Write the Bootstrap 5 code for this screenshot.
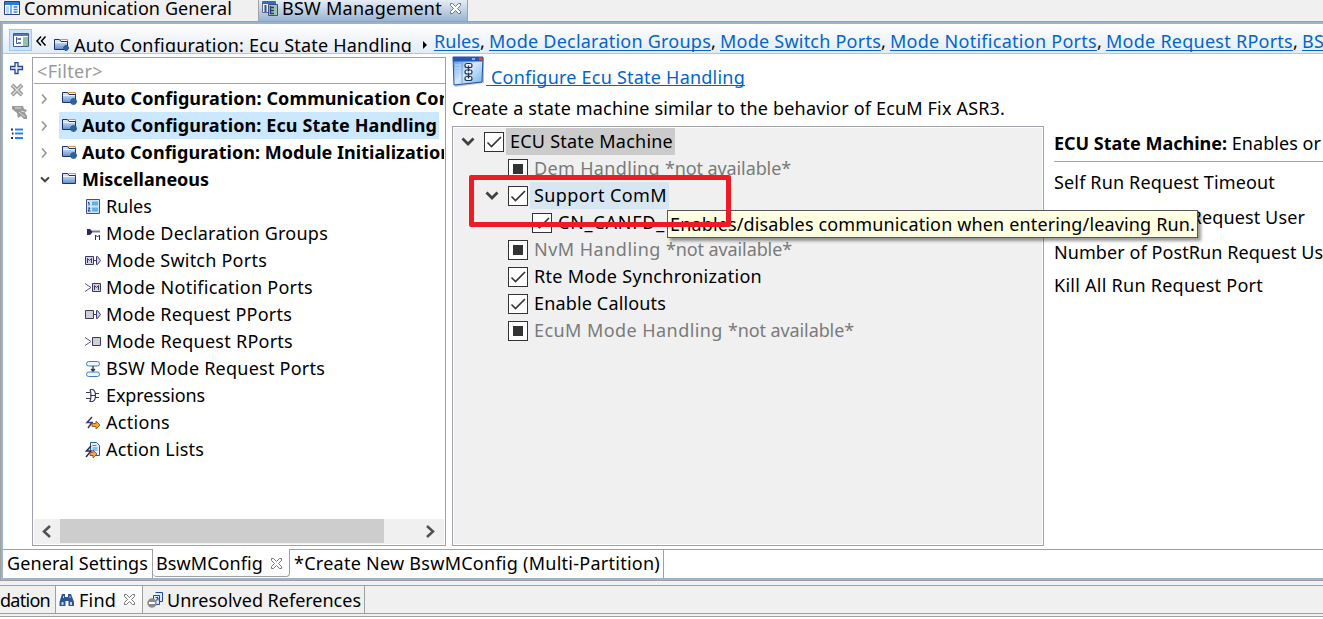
<!DOCTYPE html>
<html lang="en">
<head>
<meta charset="utf-8">
<title>BSW Management</title>
<link href="https://cdn.jsdelivr.net/npm/bootstrap@5.3.0/dist/css/bootstrap.min.css" rel="stylesheet">
<style>
body{width:1323px;height:619px;overflow:hidden;font-family:"Noto Sans","Open Sans",sans-serif;font-size:18px;line-height:27px;color:#000;background:#fff}
svg{display:block;flex:none}
[data-w]{display:inline-block;white-space:pre;flex:none}
.window{height:617px;background:#f0f0f0}
.toptabs{height:21px}
.toptabs>div{height:21px;line-height:16px}
.tab-a{width:259px;padding-left:4px;border-right:1px solid #a0a0a0}
.tab-b{width:209px;padding-left:3px;background:linear-gradient(#e6edf5,#99b4d1);border-right:1px solid #a0a0a0}
.frame{height:560px;border-top:1px solid #a0a0a0;border-left:1px solid #a0a0a0;border-bottom:1px solid #a0a0a0}
.inner{height:558px;border:solid #99b4d1;border-width:2px 0 2px 2px;background:#fff}
.crumbs{height:30px;background:linear-gradient(#fff,#e4ebf4);border-bottom:1px solid #b4c6da;overflow:hidden}
.outline-btn{width:23px;height:22px;margin:5px 0 0 6px;background:#cce4fb;border:1px solid #99caf5;padding:3px 0 0 3px;flex:none}
.crumb-now{height:28px;overflow:hidden;padding-top:8px;flex:none}
.lnk{color:#0066cc;border-bottom:1px solid #0066cc;line-height:28px;height:24px;flex:none;white-space:pre}
.crumb-links{padding-top:3px;line-height:28px}
.title-link{margin:8px 0 0 1px;padding-left:5px;line-height:30px}
.comma{width:9px;flex:none}
.tools{width:29px;padding:8px 0 0 7px}
.side{width:414px;height:489px;margin-top:3px;border:1px solid #a0a0a8;overflow:hidden}
.filter{height:26px;border-bottom:1px solid #a0a0a8;color:#999;padding-left:3px;margin-left:1px;line-height:26px}
.tree{height:435px;padding-top:1px}
.trow{height:27px;width:411px;overflow:hidden}
.trow .chev{width:26px;padding-left:7px}
.trow .lab{height:27px;width:380px;padding-left:2px}
.trow .lab svg{margin-right:4px}
.trow.picked .lab{background:#cce8ff}
.leaf{height:27px;padding-left:52px}
.leaf svg{margin-right:5px}
.hscroll{height:25px;margin:0 1px;background:#f0f0f0}
.thumb{width:324px;height:24px;background:#cdcdcd}
.main-col{width:592px;margin-left:6px}
.title-row{height:39px}
.title-row svg{margin-top:2px}
.desc{height:33px;padding-top:2px}
.states{height:420px;border:1px solid #a0a0a8;background:#f0f0f0;box-shadow:inset 0 0 0 1px #fff;padding-top:1px}
.srow{height:27px}
.srow.l1{padding-left:8px}.srow.l2{padding-left:32px}.srow.l3{padding-left:56px}
.srow .exp{width:23px}
.box{width:20px;height:20px;border:1px solid #333;background:#fff;margin-right:2px}
.slab{height:27px;padding:0 2px 0 4px;white-space:pre}
.off{color:#7a7a7a}
.info{margin-left:10px;width:269px;overflow:hidden;padding-top:76px}
.info>div{white-space:nowrap;overflow:hidden}
.info .rule{height:32px;border-bottom:1px solid #a0a0a0}
.info .field{height:35px;padding-top:7px}
.btabs{height:29px;border-top:1px solid #a0a0a0;margin-top:3px}
.btabs>div{height:28px;line-height:27px;border-right:1px solid #a0a0a0}
.btabs .cur{margin-top:-1px;padding-top:1px;height:28px;background:#fff;border-bottom:1px solid #a0a0a0;border-radius:0 0 4px 4px;line-height:28px}
.views{height:29px;margin-top:4px;border:solid #a0a0a0;border-width:1px 0}
.views>div{height:27px;border-right:1px solid #a0a0a0;line-height:28px}
.views .cur{height:27px;background:linear-gradient(#fff,#f4f4f4)}
.views div.align-items-center span{margin-top:1px}
.tip{left:667px;top:210px;width:531px;height:28px;background:#ffffe1;border:1px solid #575757;box-shadow:3px 3px 3px rgba(0,0,0,.4);padding-left:2px;line-height:26px}
.frame-red{left:469px;top:175px;width:262px;height:52px;border:5px solid #ed1c24;border-radius:2px}
</style>
</head>
<body>
<svg width="0" height="0" class="position-absolute">
<defs>
<linearGradient id="fg" x1="0" y1="0" x2="0" y2="1"><stop offset="0" stop-color="#e8f2fc"/><stop offset="1" stop-color="#5f8fce"/></linearGradient>
<linearGradient id="wg" x1="0" y1="0" x2="1" y2="1"><stop offset="0" stop-color="#4f8fe0"/><stop offset=".5" stop-color="#d4e8fb"/><stop offset="1" stop-color="#6fb4ee"/></linearGradient>
<symbol id="folder" viewBox="0 0 16 16"><path d="M6.500 3.500V1.500h7V4" fill="#fff" stroke="#d89a2c"/><path d="M.5 11.500V1.500h5l1.500 2h6.500v8z" fill="url(#fg)" stroke="#1f2f74"/><path d="M1 4.500h12" stroke="#fff" opacity=".8"/></symbol>
<symbol id="gear" viewBox="0 0 6 6"><path d="M2 0h2v1l1-.5.500 1-.5.500h1v2H5l.5 1-1 .5L4 5v1H2V5l-1 .5-.5-1L1 4H0V2h1L.5 1.500l1-1L2 1z" fill="#31609f"/></symbol>
<symbol id="closer" viewBox="0 0 11 11"><path d="M.5.500h2l3 3 3-3h2v2l-3 3 3 3v2h-2l-3-3-3 3h-2v-2l3-3-3-3z" fill="#fff" stroke="#686868" stroke-width=".9"/></symbol>
<symbol id="right" viewBox="0 0 8 12"><path d="M2 1.500 6 6l-4 4.500" fill="none" stroke="#999" stroke-width="1.700"/></symbol>
<symbol id="down" viewBox="0 0 14 9"><path d="M1.500 1.500 7 7l5.500-5.500" fill="none" stroke="#404040" stroke-width="2.800"/></symbol>
<symbol id="tick" viewBox="0 0 18 18"><path d="M2.500 9.500 6.500 13.500 16 4" fill="none" stroke="#333" stroke-width="1.600"/></symbol>
<symbol id="full" viewBox="0 0 18 18"><path d="M4 4h10v10H4z" fill="#333"/></symbol>
</defs>
</svg>
<div class="window position-relative">
  <div class="toptabs d-flex">
    <div class="tab-a d-flex">
      <svg width="16" height="16"><path d="M.5 1.500h15v13H.5z" fill="#fff" stroke="#27427c"/><path d="M1 2h14v3H1z" fill="#2b7fd0"/><path d="M2 6h3v8H2z" fill="#b8d8f4"/><path d="M7 5v9M9.500 7h4M9.500 9.500h4M9.500 12h4" stroke="#2b8be0" stroke-width="1.300"/></svg>
      <span class="ms-1" data-w="208">Communication General</span>
    </div>
    <div class="tab-b d-flex">
      <svg width="16" height="16"><path d="M.5 1.500h13v11H.5z" fill="#e8eef5" stroke="#5a6a8c"/><path d="M1 1.500h12v2.500H1z" fill="#2f6cbb"/><path d="M3.500 5v7" stroke="#3c4e82" stroke-width="2"/><path d="M6.500 4.500h9v11h-9z" fill="#9cc4b0" stroke="#3c4e82"/><path d="M8.500 6v8M8 7.500h4M8 10.500h4M8 13.500h4" stroke="#2c3a70" stroke-width="1.300"/></svg>
      <span class="ms-1" data-w="160">BSW Management</span>
      <svg style="margin:3px 0 0 8px" width="11" height="11"><use href="#closer"/></svg>
    </div>
  </div>
  <div class="frame"><div class="inner">
    <div class="crumbs d-flex">
      <div class="outline-btn"><svg width="16" height="14"><path d="M.5.500h15v13H.5z" fill="#fff" stroke="#465a87"/><path d="M1 1h14v2H1z" fill="#5d75ad"/><path d="M3.500 4v6.500H5M3.500 6H5" fill="none" stroke="#465a87"/><path d="M5 5h3v2H5zM5 9h3v2H5z" fill="#6b82b8"/><path d="M10 4h5v9h-5z" fill="#8ec5a4"/></svg></div>
      <svg style="margin-left:3px" width="12" height="30"><path d="M6 12.500 2 17l4 4.500M10.500 12.500l-4 4.500 4 4.500" fill="none" stroke="#000" stroke-width="1.500"/></svg>
      <div class="crumb-now d-flex" style="margin-left:3px"><svg style="margin-top:6px" class="ms-1" width="16" height="16"><use href="#folder" width="16" height="16"/><use href="#gear" x="9" y="7" width="6" height="6"/></svg><span style="margin-left:4px" data-w="338">Auto Configuration: Ecu State Handling</span></div>
      <svg style="margin-left:10px" width="12" height="30"><path d="M1 17v8l4-4z"/></svg>
      <div class="crumb-links d-flex"><span class="lnk" data-w="46">Rules</span><span class="comma">,</span><span class="lnk" data-w="222">Mode Declaration Groups</span><span class="comma">,</span><span class="lnk" data-w="161">Mode Switch Ports</span><span class="comma">,</span><span class="lnk" data-w="207">Mode Notification Ports</span><span class="comma">,</span><span class="lnk" data-w="187">Mode Request RPorts</span><span class="comma">,</span><span class="lnk" data-w="219">BSW Mode Request Ports</span></div>
    </div>
    <div class="d-flex" style="height:492px">
      <div class="tools d-flex flex-column">
        <svg width="14" height="13"><path d="M5 .5h3v4h4.500v3H8v4H5v-4H.5v-3H5z" fill="#e9f2fc" stroke="#23489a" stroke-width="1.300"/></svg>
        <svg class="mt-2" width="14" height="14"><path d="m2 2 10 10M12 2 2 12" stroke="#999" stroke-width="4"/><path d="m2.500 2.500 9 9M11.500 2.500l-9 9" stroke="#ddd" stroke-width="1.200"/></svg>
        <svg class="mt-2" width="17" height="15" style="margin-left:2px"><path d="M0 1h11l1 3 3 1-2 3 2 3v3h-3l-3-3-3 2-1-5-5-4z" fill="#999"/><path d="M3 3h6M7 7l6 5M9 6l4 1" stroke="#ddd"/></svg>
        <svg class="mt-2" width="14" height="12"><path d="M1 1.500h2M2 5.500h1.500M1 10h2" stroke="#222b68" stroke-width="2"/><path d="M5 1.500h8M5 5.500h8M5 10h8" stroke="#2c84d8" stroke-width="2"/></svg>
      </div>
      <div class="side">
        <div class="filter"><span data-w="66">&lt;Filter&gt;</span></div>
        <div class="tree">
          <div class="trow d-flex"><div class="chev d-flex align-items-center"><svg width="8" height="12"><use href="#right"/></svg></div><div class="lab d-flex align-items-center fw-bold"><svg width="17" height="16"><use href="#folder" x="1" width="16" height="16"/><use href="#gear" x="9" y="7" width="7" height="7"/></svg><span data-w="401">Auto Configuration: Communication Control</span></div></div>
          <div class="trow d-flex picked"><div class="chev d-flex align-items-center"><svg width="8" height="12"><use href="#right"/></svg></div><div class="lab d-flex align-items-center fw-bold"><svg width="17" height="16"><use href="#folder" x="1" width="16" height="16"/><use href="#gear" x="9" y="7" width="7" height="7"/></svg><span data-w="355">Auto Configuration: Ecu State Handling</span></div></div>
          <div class="trow d-flex"><div class="chev d-flex align-items-center"><svg width="8" height="12"><use href="#right"/></svg></div><div class="lab d-flex align-items-center fw-bold"><svg width="17" height="16"><use href="#folder" x="1" width="16" height="16"/><use href="#gear" x="9" y="7" width="7" height="7"/></svg><span data-w="370">Auto Configuration: Module Initialization</span></div></div>
          <div class="trow d-flex"><div class="chev d-flex align-items-center"><svg width="10" height="7"><use href="#down"/></svg></div><div class="lab d-flex align-items-center fw-bold"><svg width="17" height="16"><use href="#folder" x="1" width="16" height="16"/></svg><span data-w="127">Miscellaneous</span></div></div>
          <div class="leaf d-flex align-items-center"><svg width="16" height="16"><path d="M1.500.500h13v14h-13z" fill="#cfe4f8" stroke="#34549a"/><path d="M7 2.500h6v4H7zM7 8.500h6v4H7z" fill="#5fb0ea"/><path d="M3 3.500h1v3M3 9h2l-2 3h2.500" stroke="#222b60" fill="none"/></svg><span data-w="46">Rules</span></div>
          <div class="leaf d-flex align-items-center"><svg width="16" height="16"><path d="M2 3h3l2 2v2L5 9H2z" fill="#2c2a5c"/><path d="M7 5.500h8" stroke="#77779a" stroke-width="2"/><path d="M10.500 14V9l2 2 2-2v5" fill="none" stroke="#2c2a5c"/></svg><span data-w="222">Mode Declaration Groups</span></div>
          <div class="leaf d-flex align-items-center"><svg width="16" height="16"><path d="M.5 3.500h8v8h-8zM11.500 3.500h1l3 4-3 4h-1z" fill="#d4d4dc" stroke="#3a3868"/><path d="M2.500 10V5.500l2 2 2-2V10M9 7.500h2" fill="none" stroke="#3a3868"/></svg><span data-w="161">Mode Switch Ports</span></div>
          <div class="leaf d-flex align-items-center"><svg width="16" height="16"><path d="m0 3.500 6 4-6 4" fill="none" stroke="#55558a"/><path d="M7.500 3.500h8v8h-8z" fill="#d4d4dc" stroke="#3a3868"/><path d="M9.500 10V5.500l2 2 2-2V10" fill="none" stroke="#3a3868"/></svg><span data-w="207">Mode Notification Ports</span></div>
          <div class="leaf d-flex align-items-center"><svg width="16" height="16"><path d="M.5 3.500h8v8h-8zM11.500 3.500h1l3 4-3 4h-1z" fill="#d0d0d4" stroke="#3a3868"/><path d="M9 7.500h2" stroke="#3a3868"/></svg><span data-w="186">Mode Request PPorts</span></div>
          <div class="leaf d-flex align-items-center"><svg width="16" height="16"><path d="m0 3.500 6 4-6 4" fill="none" stroke="#55558a"/><path d="M7.500 3.500h8v8h-8z" fill="#d0d0d4" stroke="#3a3868"/></svg><span data-w="187">Mode Request RPorts</span></div>
          <div class="leaf d-flex align-items-center"><svg width="16" height="16"><rect x="1.500" y=".5" width="13" height="4.500" rx="2.200" fill="#eef6fd" stroke="#3f7fb5"/><rect x="1.500" y="11" width="13" height="4.500" rx="2.200" fill="#eef6fd" stroke="#3f7fb5"/><path d="M8 5v4M6 8l2 2 2-2" fill="none" stroke="#2c2a5c" stroke-width="1.300"/></svg><span data-w="219">BSW Mode Request Ports</span></div>
          <div class="leaf d-flex align-items-center"><svg width="16" height="16"><path d="M5 1.500h2.500q3 1 3 6t-3 6H5q2-6 0-12M1 4.500h4M1 10.500h4M5 7.500h5M10.500 5.500H14M10.500 9.500H14" fill="none" stroke="#3a3868" stroke-width="1.200"/></svg><span data-w="99">Expressions</span></div>
          <div class="leaf d-flex align-items-center"><svg width="16" height="16"><path d="m7 2-5 5.500h5L3 13" fill="none" stroke="#3a3868" stroke-width="1.500"/><path d="M7 8.500h4V6l4 4-4 4v-2.500H7z" fill="#f4a340" stroke="#8b4a14" stroke-width=".8"/></svg><span data-w="64">Actions</span></div>
          <div class="leaf d-flex align-items-center"><svg width="16" height="16"><path d="M5.500.500h6l3 3v10h-9z" fill="#e2f0fc" stroke="#2b5a9a"/><path d="M7.500 3.500h4M7.500 6h5M7.500 8h5" stroke="#3b8ad0"/><path d="M6 4 1.500 9H6l-5 6" fill="none" stroke="#2c2a5c" stroke-width="1.500"/><path d="M5 10.500h3V8l4 4-4 4v-2.500H5z" fill="#f4a340" stroke="#8b4a14" stroke-width=".8"/></svg><span data-w="98">Action Lists</span></div>
        </div>
        <div class="hscroll d-flex"><svg width="26" height="25"><path d="M16 7 10 12.500l6 5.500" fill="none" stroke="#505050" stroke-width="2.500"/></svg><div class="thumb"></div><svg width="60" height="25"><path d="m43 7 6 5.500-6 5.500" fill="none" stroke="#505050" stroke-width="2.500"/></svg></div>
      </div>
      <div class="main-col">
        <div class="title-row d-flex"><svg width="33" height="31"><path d="m2 1 30 1v25L3 31z" fill="#000" opacity=".25"/><path d="M1 1h30l-1 25L2 29z" fill="url(#wg)" stroke="#2450a0"/><path d="M1 1h30v4.500H1z" fill="#2356b5"/><path d="M20 2h3v2h-3z" fill="#7fb3ee"/><path d="M27 1.500h3.500v3H27z" fill="#dd4a32"/><path d="M3 9h6M3 12h6M3 15h6M3 18h6" stroke="#bcd9f6"/><path d="M10 6v21" stroke="#6fa4e0"/><g fill="#fff" stroke="#23345e" stroke-width="1.200"><rect x="13" y="7.500" width="7" height="4" rx="2"/><rect x="13" y="14" width="7" height="4" rx="2"/><rect x="13" y="20.500" width="7" height="4" rx="2"/></g><path d="M16.500 9.500v6M16.500 16.500v6" stroke="#23345e" stroke-width="1.500"/></svg><span class="lnk title-link" data-w="259">Configure Ecu State Handling</span></div>
        <div class="desc"><span data-w="553">Create a state machine similar to the behavior of EcuM Fix ASR3.</span></div>
        <div class="states">
          <div class="srow l1 d-flex align-items-center"><div class="exp"><svg width="14" height="9"><use href="#down"/></svg></div><div class="box"><svg width="18" height="18"><use href="#tick"/></svg></div><div class="slab" style="background:#cbcbcb"><span data-w="163">ECU State Machine</span></div></div>
          <div class="srow l2 d-flex align-items-center"><div class="exp"></div><div class="box"><svg width="18" height="18"><use href="#full"/></svg></div><div class="slab off"><span data-w="131">Dem Handling </span><span data-w="126">*not available*</span></div></div>
          <div class="srow l2 d-flex align-items-center"><div class="exp"><svg width="14" height="9"><use href="#down"/></svg></div><div class="box"><svg width="18" height="18"><use href="#tick"/></svg></div><div class="slab" style="background:#d8e6f2"><span data-w="133">Support ComM</span></div></div>
          <div class="srow l3 d-flex align-items-center"><div class="exp"></div><div class="box"><svg width="18" height="18"><use href="#tick"/></svg></div><div class="slab"><span data-w="107">CN_CANFD_</span></div></div>
          <div class="srow l2 d-flex align-items-center"><div class="exp"></div><div class="box"><svg width="18" height="18"><use href="#full"/></svg></div><div class="slab off"><span data-w="132">NvM Handling </span><span data-w="126">*not available*</span></div></div>
          <div class="srow l2 d-flex align-items-center"><div class="exp"></div><div class="box"><svg width="18" height="18"><use href="#tick"/></svg></div><div class="slab"><span data-w="228">Rte Mode Synchronization</span></div></div>
          <div class="srow l2 d-flex align-items-center"><div class="exp"></div><div class="box"><svg width="18" height="18"><use href="#tick"/></svg></div><div class="slab"><span data-w="132">Enable Callouts</span></div></div>
          <div class="srow l2 d-flex align-items-center"><div class="exp"></div><div class="box"><svg width="18" height="18"><use href="#full"/></svg></div><div class="slab off"><span data-w="194">EcuM Mode Handling </span><span data-w="126">*not available*</span></div></div>
        </div>
      </div>
      <div class="info">
        <div class="rule"><b data-w="173">ECU State Machine:</b><span data-w="94"> Enables or</span></div>
        <div class="field"><span data-w="221">Self Run Request Timeout</span></div>
        <div class="field"><span data-w="251">Number of Run Request User</span></div>
        <div class="field" style="height:33px"><span data-w="287">Number of PostRun Request User</span></div>
        <div class="field"><span data-w="209">Kill All Run Request Port</span></div>
      </div>
    </div>
    <div class="btabs d-flex">
      <div style="width:150px;padding-left:4px"><span data-w="141">General Settings</span></div>
      <div class="cur d-flex align-items-center" style="width:137px;padding-left:3px"><span data-w="107">BswMConfig</span><svg class="ms-2" width="11" height="11"><use href="#closer"/></svg></div>
      <div style="width:374px;padding-left:4px"><span data-w="366">*Create New BswMConfig (Multi-Partition)</span></div>
    </div>
  </div></div>
  <div class="views d-flex">
    <div style="width:56px"><span data-w="50">dation</span></div>
    <div class="cur d-flex align-items-center" style="width:87px;padding-left:3px"><svg width="16" height="16"><path d="M3 2h3v3h3V2h3l3 8v4H9.500V9h-3v5H.500v-4z" fill="#2e5590"/><path d="M2.500 10h2v3h-2zM11 10h2v3h-2zM4 4h1v2H4zM10.500 4h1v2h-1z" fill="#b9d6f2"/></svg><span style="margin-left:4px" data-w="37">Find</span><svg class="ms-2" width="11" height="11"><use href="#closer"/></svg></div>
    <div class="d-flex align-items-center" style="width:222px;padding-left:4px"><svg width="16" height="16"><path d="M8.500.500h7v9h-3M6.500 3.500h6v9h-6z" fill="#dcebfa" stroke="#23489a"/><path d="m8 10 3-4M8.500 5.500H11v3" fill="none" stroke="#23489a"/><circle cx="5" cy="11" r="4.700" fill="#8a8a8a"/><path d="M2 10h6v2H2z" fill="#fff"/></svg><span style="margin-left:4px" data-w="194">Unresolved References</span></div>
  </div>
  <div style="height:3px;border-bottom:1px solid #a0a0a0"></div>
  <div class="tip position-absolute"><span data-w="525">Enables/disables communication when entering/leaving Run.</span></div>
  <div class="frame-red position-absolute"></div>
</div>
<script src="https://cdn.jsdelivr.net/npm/bootstrap@5.3.0/dist/js/bootstrap.bundle.min.js"></script>
<script>
// Spread each label's letters over its declared width.
document.querySelectorAll('[data-w]').forEach(function (el) {
  var extra = +el.dataset.w - el.getBoundingClientRect().width;
  el.style.letterSpacing = (extra / el.textContent.length) + 'px';
});
</script>
</body>
</html>
